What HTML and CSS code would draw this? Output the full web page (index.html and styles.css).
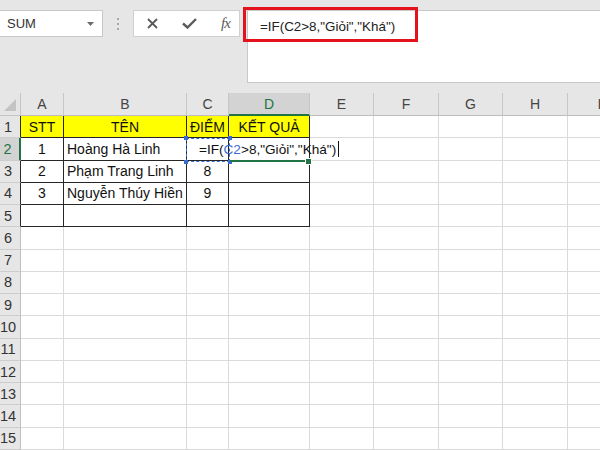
FILE: index.html
```html
<!DOCTYPE html>
<html lang="vi">
<head>
<meta charset="utf-8">
<title>Excel IF</title>
<link rel="stylesheet" href="styles.css">
</head>
<body>
<div class="app">
  <div class="toolbar">
    <div class="namebox"><span class="nb-text">SUM</span><svg class="nb-arrow" width="7" height="4" viewBox="0 0 7 4"><path d="M0 0H7L3.5 4Z" fill="#6b6b6b"/></svg></div>
    <div class="dots"><i></i><i></i><i></i></div>
    <div class="fxbox">
      <span class="fx-slot s1"><svg width="11" height="11" viewBox="0 0 11 11"><path d="M1 1L10 10M10 1L1 10" stroke="#5a5a5a" stroke-width="1.8" fill="none"/></svg></span>
      <span class="fx-slot s2"><svg width="15" height="11" viewBox="0 0 15 11"><path d="M1 5.5L5.5 9.5L14 1" stroke="#5a5a5a" stroke-width="2.4" fill="none"/></svg></span>
      <span class="fx-slot s3 fx">fx</span>
    </div>
    <div class="formula">=IF(C2&gt;8,"Giỏi","Khá")</div>
    <div class="redbox"></div>
  </div>
  <div class="sheet">
    <div class="c corner"><svg width="12" height="12" viewBox="0 0 12 12"><path d="M12 0V12H0Z" fill="#c3c3c3"/></svg></div>
    <div class="c ch">A</div><div class="c ch">B</div><div class="c ch">C</div><div class="c ch chact">D</div><div class="c ch">E</div><div class="c ch">F</div><div class="c ch">G</div><div class="c ch">H</div><div class="c ch">I</div>

    <div class="c rh rt">1</div><div class="c t y mid">STT</div><div class="c t y mid">TÊN</div><div class="c t y mid">ĐIỂM</div><div class="c t y mid">KẾT QUẢ</div><div class="c"></div><div class="c"></div><div class="c"></div><div class="c"></div><div class="c"></div>

    <div class="c rh ract">2</div><div class="c t mid">1</div><div class="c t txt">Hoàng Hà Linh</div><div class="c t"></div><div class="c t"></div><div class="c"></div><div class="c"></div><div class="c"></div><div class="c"></div><div class="c"></div>

    <div class="c rh rt">3</div><div class="c t mid">2</div><div class="c t txt">Phạm Trang Linh</div><div class="c t mid">8</div><div class="c t"></div><div class="c"></div><div class="c"></div><div class="c"></div><div class="c"></div><div class="c"></div>

    <div class="c rh rt">4</div><div class="c t mid">3</div><div class="c t txt">Nguyễn Thúy Hiền</div><div class="c t mid">9</div><div class="c t"></div><div class="c"></div><div class="c"></div><div class="c"></div><div class="c"></div><div class="c"></div>

    <div class="c rh rt">5</div><div class="c t"></div><div class="c t"></div><div class="c t"></div><div class="c t"></div><div class="c"></div><div class="c"></div><div class="c"></div><div class="c"></div><div class="c"></div>

    <div class="c rh">6</div><div class="c"></div><div class="c"></div><div class="c"></div><div class="c"></div><div class="c"></div><div class="c"></div><div class="c"></div><div class="c"></div><div class="c"></div>
    <div class="c rh">7</div><div class="c"></div><div class="c"></div><div class="c"></div><div class="c"></div><div class="c"></div><div class="c"></div><div class="c"></div><div class="c"></div><div class="c"></div>
    <div class="c rh">8</div><div class="c"></div><div class="c"></div><div class="c"></div><div class="c"></div><div class="c"></div><div class="c"></div><div class="c"></div><div class="c"></div><div class="c"></div>
    <div class="c rh">9</div><div class="c"></div><div class="c"></div><div class="c"></div><div class="c"></div><div class="c"></div><div class="c"></div><div class="c"></div><div class="c"></div><div class="c"></div>
    <div class="c rh">10</div><div class="c"></div><div class="c"></div><div class="c"></div><div class="c"></div><div class="c"></div><div class="c"></div><div class="c"></div><div class="c"></div><div class="c"></div>
    <div class="c rh">11</div><div class="c"></div><div class="c"></div><div class="c"></div><div class="c"></div><div class="c"></div><div class="c"></div><div class="c"></div><div class="c"></div><div class="c"></div>
    <div class="c rh">12</div><div class="c"></div><div class="c"></div><div class="c"></div><div class="c"></div><div class="c"></div><div class="c"></div><div class="c"></div><div class="c"></div><div class="c"></div>
    <div class="c rh">13</div><div class="c"></div><div class="c"></div><div class="c"></div><div class="c"></div><div class="c"></div><div class="c"></div><div class="c"></div><div class="c"></div><div class="c"></div>
    <div class="c rh">14</div><div class="c"></div><div class="c"></div><div class="c"></div><div class="c"></div><div class="c"></div><div class="c"></div><div class="c"></div><div class="c"></div><div class="c"></div>
    <div class="c rh">15</div><div class="c"></div><div class="c"></div><div class="c"></div><div class="c"></div><div class="c"></div><div class="c"></div><div class="c"></div><div class="c"></div><div class="c"></div>

    <div class="refbox"><i class="h tl"></i><i class="h tr"></i><i class="h bl"></i><i class="h br"></i></div>
    <div class="activeline"><i class="fill"></i></div>
    <div class="edit">=IF(<span class="ref">C2</span>&gt;8,"Giỏi","Khá")<span class="caret"></span></div>
  </div>
</div>
</body>
</html>
```
FILE: styles.css
```css
html, body {
  margin: 0;
  padding: 0;
  width: 600px;
  height: 450px;
  overflow: hidden;
  background: #e6e6e6;
  font-family: "Liberation Sans", Arial, sans-serif;
}

.app {
  width: 600px;
  height: 450px;
  overflow: hidden;
}

.toolbar {
  position: relative;
  display: flex;
  align-items: flex-start;
  height: 93px;
  padding-top: 10px;
  box-sizing: border-box;
  background: #e6e6e6;
}

.namebox {
  width: 103px;
  height: 27px;
  box-sizing: border-box;
  background: #fff;
  border: 1px solid #c8c8c8;
  border-left: none;
  display: flex;
  align-items: center;
  justify-content: space-between;
  padding: 0 8px 0 7px;
  font-size: 13px;
  color: #333;
}

.nb-arrow {
  display: block;
}

.dots {
  width: 30px;
  height: 27px;
  display: flex;
  flex-direction: column;
  align-items: center;
  justify-content: center;
  gap: 3px;
}

.dots i {
  display: block;
  width: 2px;
  height: 2px;
  background: #a8a8a8;
}

.fxbox {
  width: 107px;
  height: 27px;
  box-sizing: border-box;
  background: #fff;
  border: 1px solid #d0d0d0;
  display: flex;
  align-items: center;
}

.fx-slot {
  display: flex;
  align-items: center;
  justify-content: center;
}

.s1 { margin-left: 13px; width: 11px; }
.s2 { margin-left: 24px; width: 15px; }
.s3 { margin-left: 22px; width: 13px; }

.fx-slot svg { display: block; }

.fx {
  font-family: "Liberation Serif", "DejaVu Serif", serif;
  font-style: italic;
  font-size: 15px;
  color: #5a5a5a;
  letter-spacing: -1px;
  line-height: 1;
}

.formula {
  margin-left: 7px;
  flex: 1;
  height: 73px;
  box-sizing: border-box;
  background: #fff;
  border: 1px solid #c8c8c8;
  border-right: none;
  padding: 8px 0 0 12px;
  font-size: 13.4px;
  line-height: 16px;
  color: #222;
  white-space: nowrap;
}

.redbox {
  position: absolute;
  left: 243px;
  top: 7px;
  width: 175px;
  height: 35px;
  box-sizing: border-box;
  border: 3px solid #e3121b;
}

.sheet {
  position: relative;
  display: grid;
  grid-template-columns: 21px 43px 123px 42px 81px 64px 65px 64px 65px 64px;
  grid-template-rows: 23px repeat(15, 22.27px);
  background: #fff;
}

.c {
  box-sizing: border-box;
  border-right: 1px solid #dadada;
  border-bottom: 1px solid #dadada;
  display: flex;
  align-items: center;
  overflow: hidden;
  white-space: nowrap;
  font-size: 14px;
  color: #111;
}

.corner {
  background: #e6e6e6;
  border-right: 1px solid #c4c4c4;
  border-bottom: 1px solid #c4c4c4;
  justify-content: flex-end;
  align-items: flex-end;
  padding: 0 4px 4px 0;
}

.corner svg { display: block; }

.ch {
  background: #e6e6e6;
  justify-content: center;
  color: #444;
  font-size: 14px;
  border-right: 1px solid #c6c6c6;
  border-bottom: 1px solid #bdbdbd;
}

.chact {
  background: #d3d3d3;
  color: #217346;
  border-bottom: 2px solid #217346;
}

.rh {
  background: #e6e6e6;
  justify-content: center;
  padding-right: 4px;
  color: #333;
  font-size: 14.5px;
  border-right: 1px solid #c0c0c0;
  border-bottom: 1px solid #cdcdcd;
}

.rt {
  border-right-color: #2a2a2a;
}

.ract {
  background: #d3d3d3;
  color: #217346;
  border-right: 2px solid #217346;
}

.t {
  border-right-color: #262626;
  border-bottom-color: #262626;
}

.y {
  background: #ffff00;
}

.mid {
  justify-content: center;
}

.txt {
  padding-left: 3px;
}

.refbox {
  position: absolute;
  left: 186px;
  top: 45px;
  width: 44px;
  height: 24px;
  box-sizing: border-box;
  border: 1px dashed #3b6ccf;
}

.refbox .h {
  position: absolute;
  width: 4px;
  height: 4px;
  background: #3b6ccf;
}

.refbox .tl { left: -3px; top: -3px; }
.refbox .tr { right: -3px; top: -3px; }
.refbox .bl { left: -3px; bottom: -3px; }
.refbox .br { right: -3px; bottom: -3px; }

.activeline {
  position: absolute;
  left: 230px;
  top: 67px;
  width: 79px;
  height: 2px;
  background: #217346;
}

.activeline .fill {
  position: absolute;
  right: -3px;
  top: -2px;
  width: 5px;
  height: 5px;
  background: #217346;
  border: 1px solid #fff;
}

.edit {
  position: absolute;
  left: 199px;
  top: 47px;
  height: 18px;
  display: flex;
  align-items: center;
  font-size: 13.6px;
  color: #111;
  white-space: nowrap;
}

.edit .ref {
  color: #3b6ccf;
}

.edit .caret {
  display: block;
  width: 1px;
  height: 16px;
  margin-left: 2px;
  background: #111;
}
```
